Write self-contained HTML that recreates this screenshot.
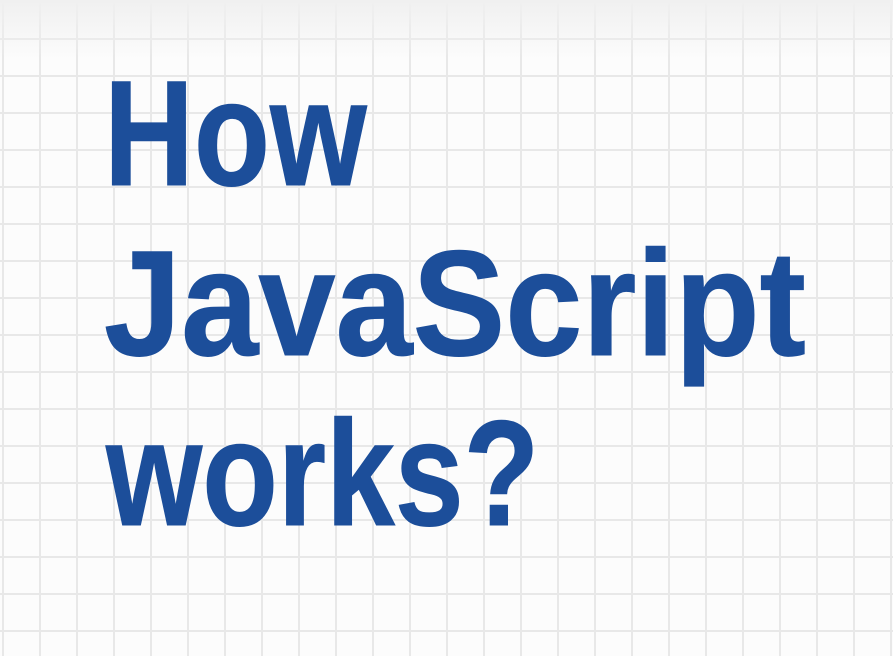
<!DOCTYPE html>
<html><head><style>
html,body{margin:0;padding:0}
body{width:893px;height:656px;overflow:hidden;position:relative;
background:#fcfcfc;
background-image:linear-gradient(90deg,#e8e8e8 2px,transparent 2px),linear-gradient(#e8e8e8 2px,transparent 2px);
background-size:37px 37px;background-position:2px 1px;}
.shade{position:absolute;left:0;top:0;width:893px;height:60px;background:linear-gradient(#f0f0f0,rgba(255,255,255,0))}
.t{position:absolute;font-family:"Liberation Sans",sans-serif;font-weight:bold;color:#1c4e9a;font-size:150px;line-height:1;white-space:nowrap;-webkit-text-stroke:1px #1c4e9a;transform-origin:0 0}
</style></head><body>
<div class="shade"></div>
<div class="t" style="left:104px;top:58px;transform:scaleX(0.83)">How</div>
<div class="t" style="left:104px;top:228px;transform:scaleX(0.925)">JavaScript</div>
<div class="t" style="left:106px;top:398px;transform:scaleX(0.825)">works?</div>
</body></html>
